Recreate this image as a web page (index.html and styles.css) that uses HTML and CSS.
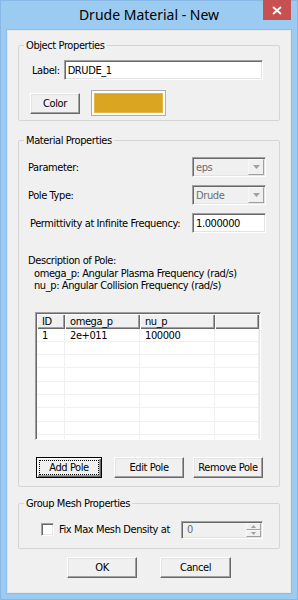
FILE: index.html
```html
<!DOCTYPE html>
<html lang="en">
<head>
    <meta charset="UTF-8" />
    <title>Drude Material - New</title>
    <link rel="stylesheet" href="styles.css">
</head>
<body>

<div class="window">

    <!-- BARRE DE TITRE -->
    <div class="titlebar">
        <div class="title">Drude Material - New</div>
        <div class="close-btn">
            <svg width="10" height="9" viewBox="0 0 10 9">
                <path d="M1 1 L9 8 M9 1 L1 8" stroke="#fff" stroke-width="1.8" fill="none"/>
            </svg>
        </div>
    </div>

    <div class="client">

        <!-- Object Properties -->
        <fieldset class="group object-group">
            <legend>Object Properties</legend>
            <div class="label-row">
                <label for="label">Label:</label>
                <input type="text" id="label" class="edit" value="DRUDE_1"/>
            </div>
            <div class="color-row">
                <button class="btn color-btn">Color</button>
                <div class="swatch"><div class="swatch-fill"></div></div>
            </div>
        </fieldset>

        <!-- Material Properties -->
        <fieldset class="group material-group">
            <legend>Material Properties</legend>

            <div class="prop-row first">
                <span class="prop-label">Parameter:</span>
                <div class="combo">
                    <span class="combo-text">eps</span>
                    <span class="combo-btn">
                        <svg width="7" height="4" viewBox="0 0 7 4"><path d="M0 0 H7 L3.5 4 Z" fill="#a0a0a0"/></svg>
                    </span>
                </div>
            </div>

            <div class="prop-row">
                <span class="prop-label">Pole Type:</span>
                <div class="combo">
                    <span class="combo-text">Drude</span>
                    <span class="combo-btn">
                        <svg width="7" height="4" viewBox="0 0 7 4"><path d="M0 0 H7 L3.5 4 Z" fill="#a0a0a0"/></svg>
                    </span>
                </div>
            </div>

            <div class="prop-row">
                <label class="prop-label eps-label" for="epsinf">Permittivity at Infinite Frequency:</label>
                <input type="text" id="epsinf" class="edit eps-edit" value="1.000000"/>
            </div>

            <div class="pole-desc">
                <div>Description of Pole:</div>
                <div class="indent">omega_p: Angular Plasma Frequency (rad/s)</div>
                <div class="indent">nu_p: Angular Collision Frequency (rad/s)</div>
            </div>

            <!-- Liste des poles -->
            <div class="listview">
                <div class="lv-head">
                    <div class="lv-cell c1">ID</div>
                    <div class="lv-cell c2">omega_p</div>
                    <div class="lv-cell c3">nu_p</div>
                    <div class="lv-cell c4"></div>
                </div>
                <div class="lv-row">
                    <div class="lv-cell c1">1</div>
                    <div class="lv-cell c2">2e+011</div>
                    <div class="lv-cell c3">100000</div>
                    <div class="lv-cell c4"></div>
                </div>
                <div class="lv-row"><div class="lv-cell c1"></div><div class="lv-cell c2"></div><div class="lv-cell c3"></div><div class="lv-cell c4"></div></div>
                <div class="lv-row"><div class="lv-cell c1"></div><div class="lv-cell c2"></div><div class="lv-cell c3"></div><div class="lv-cell c4"></div></div>
                <div class="lv-row"><div class="lv-cell c1"></div><div class="lv-cell c2"></div><div class="lv-cell c3"></div><div class="lv-cell c4"></div></div>
                <div class="lv-row"><div class="lv-cell c1"></div><div class="lv-cell c2"></div><div class="lv-cell c3"></div><div class="lv-cell c4"></div></div>
                <div class="lv-row"><div class="lv-cell c1"></div><div class="lv-cell c2"></div><div class="lv-cell c3"></div><div class="lv-cell c4"></div></div>
                <div class="lv-row"><div class="lv-cell c1"></div><div class="lv-cell c2"></div><div class="lv-cell c3"></div><div class="lv-cell c4"></div></div>
                <div class="lv-row"><div class="lv-cell c1"></div><div class="lv-cell c2"></div><div class="lv-cell c3"></div><div class="lv-cell c4"></div></div>
                <div class="lv-row"><div class="lv-cell c1"></div><div class="lv-cell c2"></div><div class="lv-cell c3"></div><div class="lv-cell c4"></div></div>
            </div>

            <div class="pole-buttons">
                <button class="btn btn-default add-btn"><span class="focus-rect">Add Pole</span></button>
                <button class="btn edit-btn">Edit Pole</button>
                <button class="btn remove-btn">Remove Pole</button>
            </div>
        </fieldset>

        <!-- Group Mesh Properties -->
        <fieldset class="group mesh-group">
            <legend>Group Mesh Properties</legend>
            <div class="mesh-row">
                <span class="checkbox"></span>
                <span class="mesh-label">Fix Max Mesh Density at</span>
                <div class="spin">
                    <span class="spin-text">0</span>
                    <span class="spin-btns">
                        <span class="spin-btn"><svg width="5" height="3" viewBox="0 0 5 3"><path d="M0 3 H5 L2.5 0 Z" fill="#a0a0a0"/></svg></span>
                        <span class="spin-btn"><svg width="5" height="3" viewBox="0 0 5 3"><path d="M0 0 H5 L2.5 3 Z" fill="#a0a0a0"/></svg></span>
                    </span>
                </div>
            </div>
        </fieldset>

        <div class="dialog-buttons">
            <button class="btn ok-btn">OK</button>
            <button class="btn cancel-btn">Cancel</button>
        </div>
    </div>
</div>

</body>
</html>
```

FILE: styles.css
```css
/* ------------------------
   FENETRE
------------------------- */
* {
    box-sizing: border-box;
}

body {
    margin: 0;
    width: 298px;
    height: 600px;
    background: #9bcbf1;
    font-family: "DejaVu Sans Condensed", "Liberation Sans", sans-serif;
    font-size: 11px;
    letter-spacing: -0.4px;
    color: #000;
}

.window {
    height: 600px;
    padding: 0 7px 7px;
    display: flex;
    flex-direction: column;
    box-shadow: inset 0 0 0 1px #86b8e6;
}

.titlebar {
    position: relative;
    height: 30px;
    flex: none;
}

.title {
    font-family: "Noto Sans", sans-serif;
    font-size: 14px;
    letter-spacing: 0;
    line-height: 30px;
    text-align: center;
    color: #000;
}

.close-btn {
    position: absolute;
    top: 0;
    right: 0;
    width: 28px;
    height: 20px;
    background: #c75050;
    display: flex;
    align-items: center;
    justify-content: center;
}

.client {
    flex: 1;
    background: #f0f0f0;
    border: 1px solid #e8e8e8;
    box-shadow: 0 0 0 1px #8fbde6;
    display: flex;
    flex-direction: column;
}

/* ------------------------
   GROUPES
------------------------- */
.group {
    margin: 0 10px;
    padding: 0;
    border: 1px solid #d5d5d5;
    border-radius: 2px;
    min-width: 0;
}

.group legend {
    margin-left: 5px;
    padding: 0 2px;
    line-height: 13px;
}

.object-group {
    margin-top: 8px;
    padding-bottom: 4px;
}

.material-group {
    margin-top: 13px;
    padding-bottom: 8px;
}

.mesh-group {
    margin-top: 10px;
    padding-bottom: 9px;
}

/* ------------------------
   CONTROLES CLASSIQUES
------------------------- */
.edit {
    height: 20px;
    padding: 0 3px;
    font: inherit;
    letter-spacing: inherit;
    color: #000;
    background: #fff;
    border: 1px solid;
    border-color: #a0a0a0 #fff #fff #a0a0a0;
    box-shadow: inset 1px 1px #696969, inset -1px -1px #e3e3e3;
    outline: none;
}

.btn {
    height: 21px;
    padding: 0;
    font: inherit;
    letter-spacing: inherit;
    color: #000;
    background: #f0f0f0;
    border: 1px solid;
    border-color: #fff #696969 #696969 #fff;
    box-shadow: inset -1px -1px #a0a0a0, inset 1px 1px #e3e3e3;
}

.btn-default {
    border: 1px solid #000;
    box-shadow: inset 1px 1px #fff, inset -1px -1px #696969, inset -2px -2px #a0a0a0;
    padding: 2px;
}

.focus-rect {
    display: flex;
    align-items: center;
    justify-content: center;
    height: 100%;
    border: 1px dotted #000;
}

/* Object Properties */
.label-row {
    margin-top: 8px;
    padding: 0 16px 0 13px;
    display: flex;
    align-items: center;
    gap: 4px;
}

.label-row .edit {
    flex: 1;
    min-width: 0;
}

.color-row {
    margin-top: 10px;
    height: 26px;
    padding-left: 11px;
    display: flex;
    align-items: center;
}

.color-btn {
    width: 50px;
}

.swatch {
    margin-left: 11px;
    width: 75px;
    height: 26px;
    padding: 2px;
    background: #fff;
    border: 1px solid #adadad;
}

.swatch-fill {
    height: 100%;
    background: #daa520;
    border: 1px solid #e2b54a;
}

/* Material Properties */
.prop-row {
    margin-top: 8px;
    height: 20px;
    padding: 0 13px 0 9px;
    display: flex;
    align-items: center;
}

.prop-row.first {
    margin-top: 10px;
}

.prop-label {
    flex: 1;
}

.eps-label {
    padding-left: 2px;
}

.combo {
    width: 74px;
    height: 20px;
    padding: 1px;
    display: flex;
    align-items: center;
    background: #f0f0f0;
    border: 1px solid;
    border-color: #a0a0a0 #fff #fff #a0a0a0;
    box-shadow: inset 1px 1px #696969, inset -1px -1px #e3e3e3;
}

.combo-text {
    flex: 1;
    padding-left: 2px;
    color: #6d6d6d;
}

.combo-btn {
    width: 16px;
    height: 16px;
    display: flex;
    align-items: center;
    justify-content: center;
    background: #f0f0f0;
    border: 1px solid;
    border-color: #f8f8f8 #a0a0a0 #a0a0a0 #f8f8f8;
}

.eps-edit {
    width: 74px;
}

.pole-desc {
    margin-top: 22px;
    padding-left: 9px;
    line-height: 12.5px;
}

.pole-desc .indent {
    padding-left: 6px;
}

/* Liste des poles */
.listview {
    margin: 19px 18px 0 16px;
    height: 128px;
    padding: 1px;
    overflow: hidden;
    background: #fff;
    border: 1px solid;
    border-color: #a0a0a0 #fff #fff #a0a0a0;
    box-shadow: inset 1px 1px #696969, inset -1px -1px #e3e3e3;
}

.lv-head {
    display: flex;
    height: 15px;
}

.lv-head .lv-cell {
    background: #f0f0f0;
    box-shadow: inset 1px 1px #fff, inset -1px -1px #696969, inset -2px -2px #a0a0a0;
    line-height: 15px;
}

.lv-row {
    display: flex;
    height: 13.33px;
    background: #fff;
}

.lv-row .lv-cell {
    border-right: 1px solid #f0f0f0;
    border-bottom: 1px solid #f0f0f0;
    line-height: 13px;
}

.lv-cell {
    padding-left: 5px;
    white-space: nowrap;
    overflow: hidden;
}

.c1 { width: 28px; }
.c2 { width: 75px; }
.c3 { width: 75px; }
.c4 { flex: 1; }

.pole-buttons {
    margin-top: 17px;
    padding-left: 17px;
    display: flex;
}

.add-btn {
    width: 66px;
}

.edit-btn {
    width: 70px;
    margin-left: 12px;
}

.remove-btn {
    width: 70px;
    margin-left: 9px;
}

/* Group Mesh Properties */
.mesh-row {
    margin-top: 11px;
    height: 18px;
    padding: 0 16px 0 22px;
    display: flex;
    align-items: center;
}

.checkbox {
    width: 13px;
    height: 13px;
    margin-right: 5px;
    background: #fff;
    border: 1px solid;
    border-color: #a0a0a0 #fff #fff #a0a0a0;
    box-shadow: inset 1px 1px #696969, inset -1px -1px #e3e3e3;
}

.mesh-label {
    flex: 1;
}

.spin {
    width: 82px;
    height: 18px;
    padding: 1px;
    display: flex;
    background: #f0f0f0;
    border: 1px solid;
    border-color: #a0a0a0 #fff #fff #a0a0a0;
    box-shadow: inset 1px 1px #696969, inset -1px -1px #e3e3e3;
}

.spin-text {
    flex: 1;
    padding-left: 4px;
    line-height: 14px;
    color: #6d6d6d;
}

.spin-btns {
    width: 15px;
    display: flex;
    flex-direction: column;
}

.spin-btn {
    flex: 1;
    display: flex;
    align-items: center;
    justify-content: center;
    border: 1px solid;
    border-color: #f8f8f8 #a0a0a0 #a0a0a0 #f8f8f8;
}

/* Boutons du bas */
.dialog-buttons {
    margin-top: 8px;
    display: flex;
    justify-content: center;
    gap: 23px;
}

.ok-btn {
    width: 70px;
}

.cancel-btn {
    width: 71px;
}
```
